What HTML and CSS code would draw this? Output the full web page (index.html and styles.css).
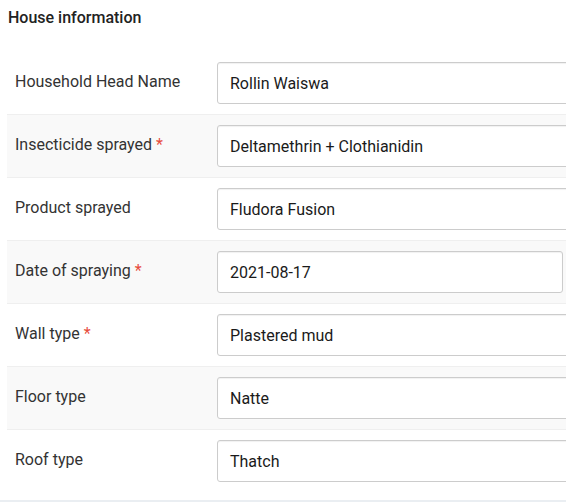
FILE: index.html
```html
<!DOCTYPE html>
<html>
<head>
<meta charset="utf-8">
<link rel="stylesheet" href="styles.css">
</head>
<body>
<div class="page">
  <h3 class="title">House information</h3>
  <div class="form">
    <div class="row">
      <div class="label">Household Head Name</div>
      <div class="field"><div class="input">Rollin Waiswa</div></div>
    </div>
    <div class="row">
      <div class="label">Insecticide sprayed <span class="req">*</span></div>
      <div class="field"><div class="input">Deltamethrin + Clothianidin</div></div>
    </div>
    <div class="row">
      <div class="label">Product sprayed</div>
      <div class="field"><div class="input">Fludora Fusion</div></div>
    </div>
    <div class="row">
      <div class="label">Date of spraying <span class="req">*</span></div>
      <div class="field"><div class="input date">2021-08-17</div></div>
    </div>
    <div class="row">
      <div class="label">Wall type <span class="req">*</span></div>
      <div class="field"><div class="input">Plastered mud</div></div>
    </div>
    <div class="row">
      <div class="label">Floor type</div>
      <div class="field"><div class="input">Natte</div></div>
    </div>
    <div class="row">
      <div class="label">Roof type</div>
      <div class="field"><div class="input">Thatch</div></div>
    </div>
  </div>
</div>
<div class="footer"></div>
</body>
</html>
```

FILE: styles.css
```css
html, body {
  margin: 0;
  padding: 0;
  overflow: hidden;
  background: #fff;
}
body {
  font-family: Roboto, "Noto Sans", sans-serif;
  color: #222;
  width: 566px;
  height: 502px;
  position: relative;
}
.page {
  padding: 8px 0 0 7px;
}
.title {
  margin: 0 0 0 1px;
  font-size: 16px;
  font-weight: 500;
  line-height: 20px;
  color: #222;
}
.form {
  margin-top: 23px;
  width: 559px;
  overflow: hidden;
}
.row {
  display: grid;
  grid-template-columns: 210px 1fr;
  height: 63px;
  box-sizing: border-box;
  border-top: 1px solid #efefef;
}
.row:first-child {
  border-top-color: transparent;
}
.row:nth-child(even) {
  background: #f9f9f9;
}
.label {
  padding: 19px 0 0 8px;
  font-size: 16px;
  line-height: 22px;
  color: #333;
}
.req {
  color: #e74c3c;
}
.field {
  padding-top: 10px;
  overflow: hidden;
}
.input {
  box-sizing: border-box;
  height: 42px;
  width: 420px;
  border: 1px solid #ccc;
  border-radius: 3px;
  background: #fff;
  box-shadow: inset 0 1px 1px rgba(0,0,0,0.06);
  padding: 0 12px;
  font-size: 16px;
  color: #1a1a1a;
  display: flex;
  align-items: center;
}
.input.date {
  width: 346px;
}
.footer {
  position: absolute;
  left: 0;
  right: 0;
  bottom: 0;
  height: 2px;
  background: #eaeef2;
}
```
